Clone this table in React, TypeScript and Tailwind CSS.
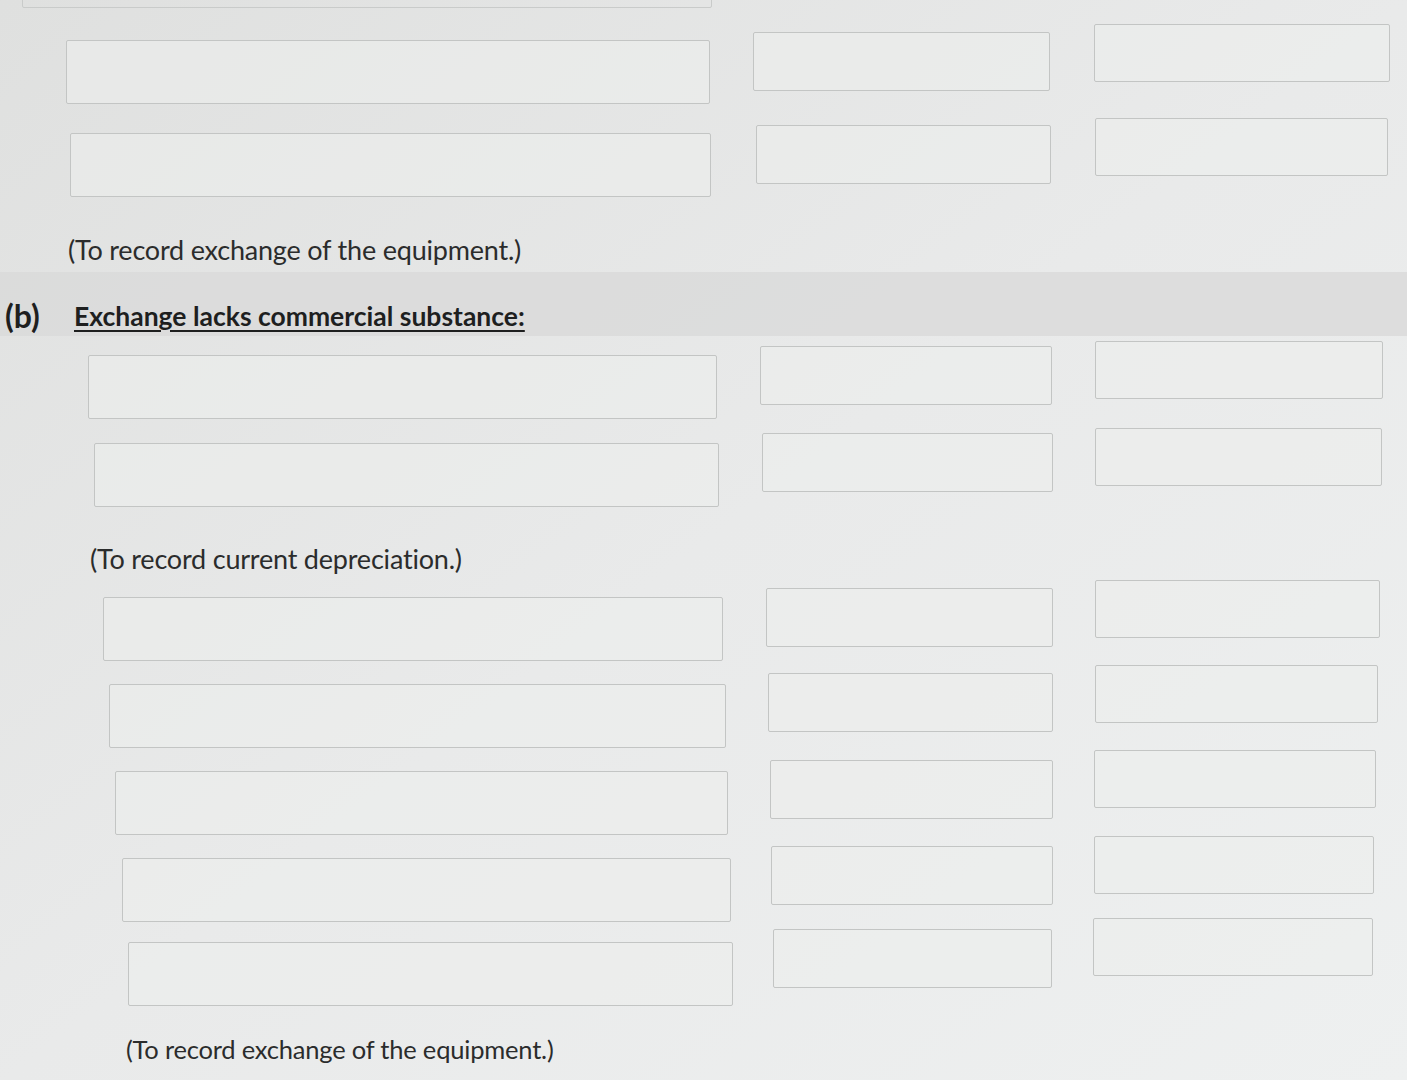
import React from 'react'

// Journal entry rows:
// [accountLeft, accountRight, debitLeft, debitRight, creditLeft, creditRight, gapAbove, accountOffset, debitOffset]
type Row = [number, number, number, number, number, number, number, number, number]

const rowsA: Row[] = [
  [66, 710, 753, 1050, 1094, 1390, 0, 16, 8],
  [70, 711, 756, 1051, 1095, 1388, 10, 15, 7],
]

const rowsB1: Row[] = [
  [88, 717, 760, 1052, 1095, 1383, 0, 14, 5],
  [94, 719, 762, 1053, 1095, 1382, 3, 15, 5],
]

const rowsB2: Row[] = [
  [103, 723, 766, 1053, 1095, 1380, 0, 17, 8],
  [109, 726, 768, 1053, 1095, 1378, 1, 19, 8],
  [115, 728, 770, 1053, 1094, 1376, 1, 21, 10],
  [122, 731, 771, 1053, 1094, 1374, 2, 22, 10],
  [128, 733, 773, 1052, 1093, 1373, -2, 24, 11],
]

function Box({ width, top, className }: { width: number; top: number; className: string }) {
  return (
    <div
      style={{ width, marginTop: top }}
      className={`shrink-0 rounded-[2px] border border-[#c3c5c4] bg-[#eceeed]/60 ${className}`}
    />
  )
}

function EntryRow({ row }: { row: Row }) {
  const [aL, aR, dL, dR, cL, cR, gap, aOff, dOff] = row
  return (
    <div className="flex h-[84px] items-start" style={{ paddingLeft: aL, marginTop: gap }}>
      <Box width={aR - aL} top={aOff} className="h-[64px]" />
      <div style={{ width: dL - aR }} className="shrink-0" />
      <Box width={dR - dL} top={dOff} className="h-[59px]" />
      <div style={{ width: cL - dR }} className="shrink-0" />
      <Box width={cR - cL} top={0} className="h-[58px]" />
    </div>
  )
}

function Note({ left, small, children }: { left: number; small?: boolean; children: React.ReactNode }) {
  return (
    <div
      style={{ paddingLeft: left }}
      className={`h-[32px] leading-[32px] tracking-[-0.2px] text-[#2b2c2c] ${small ? 'text-[25.5px]' : 'text-[27px]'}`}
    >
      {children}
    </div>
  )
}

export default function App() {
  return (
    <div
      className="h-[1080px] w-[1407px] overflow-hidden bg-gradient-to-br from-[#dfe0df] via-[#e9eaea] to-[#eef0f0]"
      style={{ fontFamily: 'Lato, "Open Sans", sans-serif' }}
    >
      {/* bottom edge of the previous entry row */}
      <div className="-mt-[56px] flex h-[64px] pl-[22px]">
        <div className="h-[64px] w-[690px] rounded-[2px] border border-[#c9cbca]" />
      </div>

      <div className="mt-[16px]">
        {rowsA.map((r, i) => (
          <EntryRow key={i} row={r} />
        ))}
      </div>

      <div className="mt-[32px]">
        <Note left={68}>(To record exchange of the equipment.)</Note>
      </div>

      <div className="mt-[6px] flex h-[64px] items-end bg-[#d9dad9]/80 pb-[4px]">
        <span className="w-[74px] shrink-0 pl-[5px] text-[32px] font-bold leading-[32px] text-[#1e1f1f]">(b)</span>
        <span className="text-[26.5px] font-bold leading-[32px] text-[#1e1f1f] underline decoration-[2px] underline-offset-[4px]">
          Exchange lacks commercial substance:
        </span>
      </div>

      <div className="mt-[5px]">
        {rowsB1.map((r, i) => (
          <EntryRow key={i} row={r} />
        ))}
      </div>

      <div className="mt-[31px]">
        <Note left={90}>(To record current depreciation.)</Note>
      </div>

      <div className="mt-[5px]">
        {rowsB2.map((r, i) => (
          <EntryRow key={i} row={r} />
        ))}
      </div>

      <div className="mt-[31px]">
        <Note left={126} small>
          (To record exchange of the equipment.)
        </Note>
      </div>
    </div>
  )
}
